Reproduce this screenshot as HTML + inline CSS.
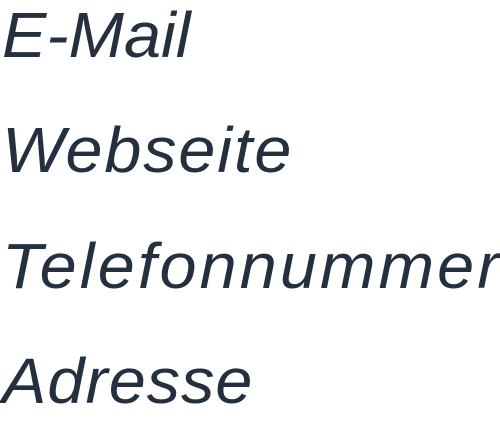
<!DOCTYPE html>
<html><head><meta charset="utf-8"><style>
html,body{margin:0;padding:0;background:#fff;width:500px;height:434px;overflow:hidden}
div{position:absolute;left:2px;font-family:"Liberation Sans",sans-serif;font-style:italic;font-size:64px;line-height:64px;color:#243040;letter-spacing:3px;white-space:nowrap;transform-origin:0 0;transform:scaleX(1.04)}
</style></head><body>
<div style="top:3px;letter-spacing:0px">E-Mail</div>
<div style="top:118px;letter-spacing:1.8px">Webseite</div>
<div style="top:234px">Telefonnummer</div>
<div style="top:349px;letter-spacing:1px">Adresse</div>
</body></html>
